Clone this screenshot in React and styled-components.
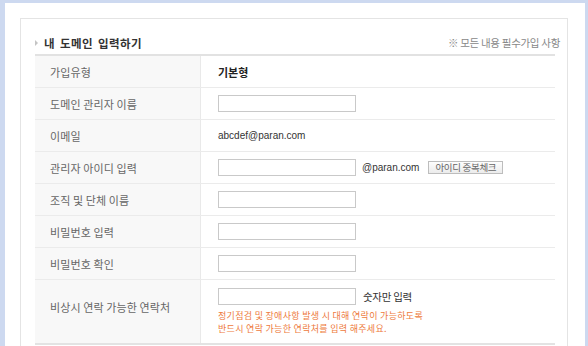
import React from 'react';
import styled, { createGlobalStyle } from 'styled-components';

const GlobalStyle = createGlobalStyle`
    * {
        box-sizing: border-box;
    }
    body {
        margin: 0;
        background: #ffffff;
        font-family: "Noto Sans CJK KR", "Noto Sans", sans-serif;
    }
`;

const Frame = styled.div`
    height: 346px;
    overflow: hidden;
    border-left: 5px solid #cdd9f0;
    border-top: 3px solid #cdd9f0;
    border-right: 3px solid #cdd9f0;
    padding: 15px 17px 0 15px;
    background: #ffffff;
`;

const Card = styled.div`
    height: 100%;
    border: 1px solid #e4e4e4;
    border-bottom: none;
    padding: 0 12px 0 14px;
`;

const Header = styled.div`
    height: 37px;
    display: flex;
    align-items: center;
    justify-content: space-between;
    padding-top: 12px;
    border-bottom: 2px solid #e2e2e2;
`;

const Title = styled.h3`
    margin: 0;
    display: flex;
    align-items: center;
    font-size: 11.5px;
    font-weight: 700;
    color: #333;
    letter-spacing: 0.4px;
    word-spacing: 2px;

    &::before {
        content: '';
        width: 0;
        height: 0;
        border-top: 3px solid transparent;
        border-bottom: 3px solid transparent;
        border-left: 3px solid #c4c4c4;
        margin-right: 6px;
    }
`;

const Note = styled.span`
    font-size: 10.5px;
    color: #888;
    margin-right: -5px;
    letter-spacing: -0.3px;
`;

const Row = styled.div`
    display: grid;
    grid-template-columns: 166px 1fr;
    min-height: ${(p) => (p.$tall ? 65 : 32)}px;
    border-bottom: ${(p) => (p.$last ? '2px solid #e3e3e3' : '1px solid #ebebeb')};
`;

const Label = styled.div`
    display: flex;
    align-items: center;
    padding: 0 0 ${(p) => p.$shift || 0}px 15px;
    background: #f8f8f8;
    border-right: 1px solid #e9e9e9;
    font-size: 11px;
    color: #666;
    letter-spacing: 0.1px;
`;

const Value = styled.div`
    display: flex;
    flex-direction: column;
    padding: ${(p) => (p.$tall ? '8px' : '0')} 0 0 17px;
    justify-content: ${(p) => (p.$tall ? 'flex-start' : 'center')};
`;

const Line = styled.div`
    display: flex;
    align-items: center;
`;

const Strong = styled.span`
    font-size: 11px;
    font-weight: 700;
    color: #222;
`;

const Latin = styled.span`
    font-family: "Liberation Sans", Arial, sans-serif;
    font-size: 10px;
    color: #333;
    margin-left: ${(p) => p.$gap || 0}px;
`;

const TextInput = styled.input`
    width: 138px;
    height: 17px;
    margin: 0;
    padding: 0 3px;
    border: 1px solid #c9c9c9;
    background: #fff;
    font-size: 10px;
`;

const CheckButton = styled.button`
    height: 13px;
    margin-left: 9px;
    padding: 0 6px;
    border: 1px solid #bdbdbd;
    background: linear-gradient(#fdfdfd, #ececec);
    font-family: inherit;
    font-size: 9.5px;
    line-height: 11px;
    color: #666;
    letter-spacing: -0.3px;
`;

const Hint = styled.span`
    margin-left: 7px;
    font-size: 10.5px;
    color: #333;
    letter-spacing: -0.3px;
`;

const Warning = styled.p`
    margin: 4px 0 0;
    font-size: 9px;
    line-height: 13px;
    color: #ee7a3c;
    letter-spacing: 0.3px;
`;

const fields = [
    { label: '도메인 관리자 이름' },
    { label: '이메일', email: 'abcdef@paran.com' },
    { label: '관리자 아이디 입력', check: true },
    { label: '조직 및 단체 이름' },
    { label: '비밀번호 입력', type: 'password' },
    { label: '비밀번호 확인', type: 'password' },
];

const DomainForm = () => {
    return (
        <Frame>
            <Card>
                <Header>
                    <Title>내 도메인 입력하기</Title>
                    <Note>※ 모든 내용 필수가입 사항</Note>
                </Header>

                <Row>
                    <Label>가입유형</Label>
                    <Value>
                        <Strong>기본형</Strong>
                    </Value>
                </Row>

                {fields.map((f) => (
                    <Row key={f.label}>
                        <Label>{f.label}</Label>
                        <Value>
                            {f.email ? (
                                <Latin>{f.email}</Latin>
                            ) : (
                                <Line>
                                    <TextInput type={f.type || 'text'} />
                                    {f.check && (
                                        <>
                                            <Latin $gap={6}>@paran.com</Latin>
                                            <CheckButton type="button">아이디 중복체크</CheckButton>
                                        </>
                                    )}
                                </Line>
                            )}
                        </Value>
                    </Row>
                ))}

                <Row $tall $last>
                    <Label $shift={10}>비상시 연락 가능한 연락처</Label>
                    <Value $tall>
                        <Line>
                            <TextInput type="tel" />
                            <Hint>숫자만 입력</Hint>
                        </Line>
                        <Warning>
                            정기점검 및 장애사항 발생 시 대해 연락이 가능하도록<br />
                            반드시 연락 가능한 연락처를 입력 해주세요.
                        </Warning>
                    </Value>
                </Row>
            </Card>
        </Frame>
    );
};

export default function App() {
    return (
        <>
            <GlobalStyle />
            <DomainForm />
        </>
    );
}
